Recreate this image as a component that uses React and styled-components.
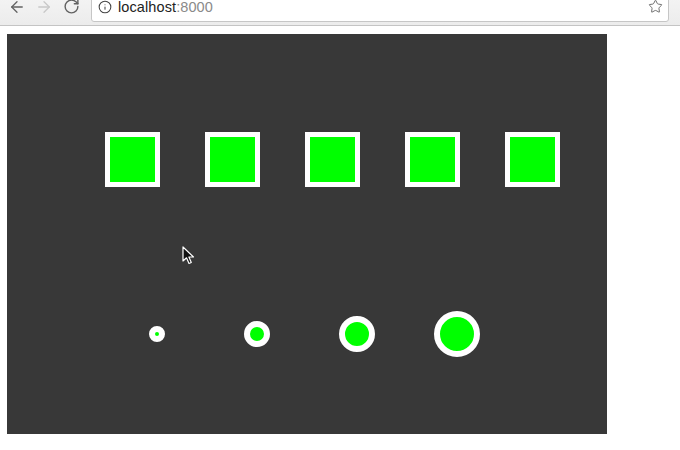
import React from "react";
import styled, { createGlobalStyle } from "styled-components";
import { ArrowLeft, ArrowRight, RotateCw, Info, Star } from "lucide-react";

const GlobalStyle = createGlobalStyle`
  html, body {
    margin: 0;
    padding: 0;
    background: #fff;
    font-family: "Liberation Sans", Arial, sans-serif;
    overflow: hidden;
  }
`;

const Window = styled.div`
  width: 680px;
  height: 450px;
  position: relative;
  overflow: hidden;
`;

const Toolbar = styled.div`
  height: 37px;
  margin-top: -12px;
  background: linear-gradient(#f6f6f6, #ececec);
  border-bottom: 1px solid #c4c4c4;
  display: flex;
  align-items: center;
  padding: 0 11px 0 8px;
  gap: 9px;
`;

const NavButton = styled.div`
  width: 18px;
  height: 18px;
  display: flex;
  align-items: center;
  justify-content: center;
  color: ${(p) => (p.disabled ? "#c8c8c8" : "#626262")};
`;

const AddressBar = styled.div`
  flex: 1;
  height: 28px;
  margin-left: 2px;
  background: #fff;
  border: 1px solid #c6c6c6;
  border-radius: 3px;
  display: flex;
  align-items: center;
  padding: 0 5px 0 6px;
  gap: 6px;
  font-size: 14.5px;
  color: #222;
`;

const Host = styled.span`
  flex: 1;
  letter-spacing: 0.1px;
`;

const Port = styled.span`
  color: #8a8a8a;
`;

const Page = styled.div`
  padding: 8px 7px;
`;

const Canvas = styled.div`
  width: 600px;
  height: 400px;
  background: #383838;
  display: grid;
  grid-template-rows: 250px 100px;
`;

const Row = styled.div`
  display: grid;
  grid-template-columns: repeat(${(p) => p.count}, 100px);
  align-items: center;
  justify-items: center;
  padding-left: ${(p) => p.offset}px;
`;

const Square = styled.div`
  width: 45px;
  height: 45px;
  background: #00ff00;
  border: 5px solid #fff;
`;

const Dot = styled.div`
  width: ${(p) => p.size}px;
  height: ${(p) => p.size}px;
  background: #00ff00;
  border: 6px solid #fff;
  border-radius: 50%;
`;

const Cursor = styled.svg`
  position: absolute;
  left: 182px;
  top: 246px;
`;

export default function App() {
  return (
    <Window>
      <GlobalStyle />
      <Toolbar>
        <NavButton>
          <ArrowLeft size={20} strokeWidth={1.7} />
        </NavButton>
        <NavButton disabled>
          <ArrowRight size={20} strokeWidth={1.7} />
        </NavButton>
        <NavButton>
          <RotateCw size={17} strokeWidth={2} />
        </NavButton>
        <AddressBar>
          <Info size={14} strokeWidth={1.8} color="#444" />
          <Host>
            localhost<Port>:8000</Port>
          </Host>
          <Star size={15} strokeWidth={1.5} color="#666" />
        </AddressBar>
      </Toolbar>
      <Page>
        <Canvas>
          <Row count={5} offset={75}>
            {[0, 1, 2, 3, 4].map((i) => (
              <Square key={i} />
            ))}
          </Row>
          <Row count={4} offset={100}>
            {[4, 14, 24, 34].map((s) => (
              <Dot key={s} size={s} />
            ))}
          </Row>
        </Canvas>
      </Page>
      <Cursor width="13" height="20" viewBox="0 0 13 20">
        <path
          d="M1 1 L1 15 L4.5 11.8 L7 17.5 L9.3 16.5 L6.9 11 L11.5 11 Z"
          fill="#111"
          stroke="#fff"
          strokeWidth="1.2"
          strokeLinejoin="round"
        />
      </Cursor>
    </Window>
  );
}
